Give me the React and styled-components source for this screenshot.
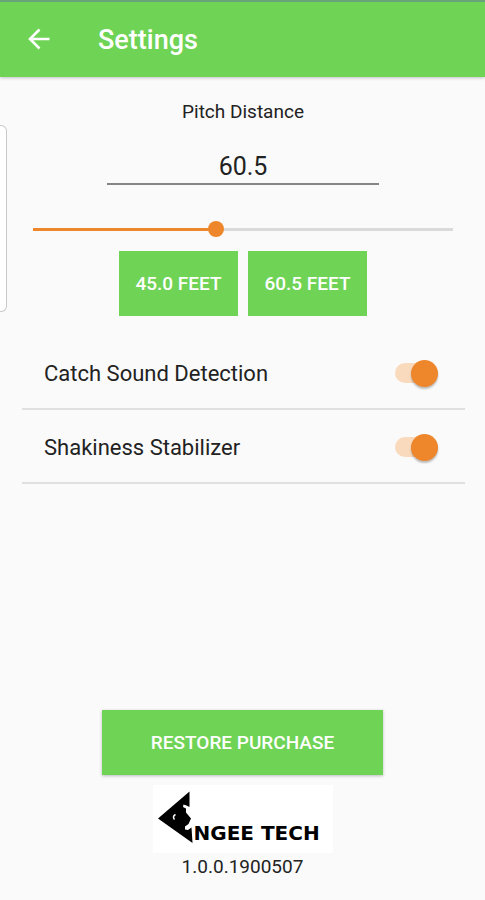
import React, { useState } from "react";
import styled, { createGlobalStyle } from "styled-components";

const GREEN = "#6fd355";
const ORANGE = "#ee862b";

const GlobalStyle = createGlobalStyle`
  *, *::before, *::after { box-sizing: border-box; }
  body {
    margin: 0;
    background: #fafafa;
    color: #222;
    font-family: Roboto, "Liberation Sans", sans-serif;
  }
`;

const Screen = styled.div`
  position: relative;
  display: flex;
  flex-direction: column;
  min-height: 100vh;
`;

const AppBar = styled.header`
  display: flex;
  align-items: center;
  gap: 46px;
  height: 77px;
  padding: 0 26px;
  border-top: 2px solid #67a279;
  background: ${GREEN};
  color: #fff;
  box-shadow: 0 1px 3px rgba(0, 0, 0, 0.22);
`;

const BackButton = styled.button`
  display: flex;
  padding: 0;
  border: 0;
  background: none;
  color: inherit;
  cursor: pointer;
`;

const Title = styled.h1`
  margin: 0;
  font-size: 27px;
  font-weight: 500;
  line-height: 32px;
`;

const EdgePanel = styled.aside`
  position: absolute;
  top: 125px;
  left: 0;
  width: 7px;
  height: 187px;
  border: 1px solid #c8c8c8;
  border-left: 0;
  border-radius: 0 6px 6px 0;
  background: #fff;
`;

const Content = styled.main`
  display: flex;
  flex: 1;
  flex-direction: column;
`;

const Distance = styled.section`
  display: flex;
  flex-direction: column;
  align-items: center;
  padding: 23px 32px 0 33px;
`;

const DistanceLabel = styled.label`
  font-size: 19px;
  line-height: 24px;
`;

const DistanceInput = styled.input`
  width: 272px;
  max-width: 100%;
  height: 40px;
  margin-top: 21px;
  padding: 4px 0 0;
  border: 0;
  border-bottom: 2px solid #858585;
  outline: 0;
  background: transparent;
  color: #222;
  font-family: inherit;
  font-size: 25px;
  text-align: center;
`;

const Slider = styled.input`
  appearance: none;
  width: 100%;
  height: 18px;
  margin: 35px 0 13px;
  background: linear-gradient(
      to right,
      ${ORANGE} var(--filled),
      #dadada var(--filled)
    )
    center / 100% 3px no-repeat;
  cursor: pointer;

  &::-webkit-slider-thumb {
    appearance: none;
    width: 16px;
    height: 16px;
    border-radius: 50%;
    background: ${ORANGE};
  }
`;

const Presets = styled.div`
  display: flex;
  gap: 10px;
`;

const ActionButton = styled.button`
  width: ${({ $wide }) => ($wide ? 281 : 119)}px;
  max-width: 100%;
  height: 65px;
  padding: 0;
  border: 0;
  background: ${GREEN};
  color: #fff;
  font-family: inherit;
  font-size: 19px;
  font-weight: 500;
  cursor: pointer;
  box-shadow: ${({ $wide }) => ($wide ? "0 1px 3px rgba(0, 0, 0, 0.25)" : "none")};
`;

const Options = styled.section`
  padding: 20px 20px 0 22px;
`;

const OptionRow = styled.label`
  display: flex;
  align-items: center;
  justify-content: space-between;
  height: 74px;
  padding: 2px 27px 0 22px;
  border-bottom: 2px solid #e0e0e0;
  font-size: 22px;
  cursor: pointer;
`;

const Toggle = styled.input`
  appearance: none;
  display: flex;
  align-items: center;
  justify-content: ${({ checked }) => (checked ? "flex-end" : "flex-start")};
  width: 43px;
  height: 20px;
  margin: 0;
  background: ${({ checked }) => (checked ? "#fadabd" : "#ccc")};
  border-radius: 10px;
  cursor: pointer;

  &::before {
    content: "";
    flex: none;
    width: 27px;
    height: 27px;
    border-radius: 50%;
    background: ${({ checked }) => (checked ? ORANGE : "#f5f5f5")};
    box-shadow: 0 2px 2px rgba(0, 0, 0, 0.25);
  }
`;

const Footer = styled.footer`
  display: flex;
  flex-direction: column;
  align-items: center;
  margin-top: auto;
  padding: 24px 20px 21px;
`;

const Logo = styled.div`
  display: flex;
  align-items: flex-end;
  width: 180px;
  height: 68px;
  margin-top: 10px;
  padding: 0 0 10px 5px;
  background: #fff;
  color: #000;
`;

const LogoText = styled.span`
  font-family: "DejaVu Sans", sans-serif;
  font-size: 20px;
  font-weight: 700;
  line-height: 20px;
  white-space: nowrap;
`;

const Version = styled.p`
  margin: 2px 0 0;
  font-size: 19px;
  line-height: 24px;
`;

function BackArrow() {
  return (
    <svg width="26" height="24" viewBox="0 0 26 24" fill="none" stroke="currentColor" strokeWidth="2.6" aria-hidden="true">
      <path d="M23.500 11H4.500M13.500 1.500 4 11l9.500 9.500" />
    </svg>
  );
}

function LogoMark() {
  return (
    <svg width="36" height="53" viewBox="0 0 36 53" aria-hidden="true">
      <path
        fill="#000"
        d="M0 28.500 31.500 1.500V17L28.500 15.500 25.500 14.500 25 17 28 18.500V22.500L33 28.500 30.500 34 27 36.500V39.500L30 40 33.500 37.500 34.500 53Z"
      />
      <path fill="none" stroke="#fff" strokeWidth="1.5" d="M17.500 24.500Q14 26.500 16.500 29.500" />
    </svg>
  );
}

export default function App() {
  const [distance, setDistance] = useState("60.5");
  const [catchSound, setCatchSound] = useState(true);
  const [stabilizer, setStabilizer] = useState(true);

  const ratio = Math.min(Math.max(Number(distance) / 140 || 0, 0), 1);

  return (
    <Screen>
      <GlobalStyle />
      <AppBar>
        <BackButton type="button" aria-label="Back">
          <BackArrow />
        </BackButton>
        <Title>Settings</Title>
      </AppBar>
      <EdgePanel />
      <Content>
        <Distance>
          <DistanceLabel htmlFor="distance">Pitch Distance</DistanceLabel>
          <DistanceInput
            id="distance"
            inputMode="decimal"
            value={distance}
            onChange={(e) => setDistance(e.target.value)}
          />
          <Slider
            type="range"
            aria-label="Pitch Distance"
            min="0"
            max="140"
            step="0.5"
            value={Number(distance) || 0}
            style={{ "--filled": `${ratio * 100}%` }}
            onChange={(e) => setDistance(Number(e.target.value).toFixed(1))}
          />
          <Presets>
            <ActionButton type="button" onClick={() => setDistance("45.0")}>
              45.0 FEET
            </ActionButton>
            <ActionButton type="button" onClick={() => setDistance("60.5")}>
              60.5 FEET
            </ActionButton>
          </Presets>
        </Distance>
        <Options>
          <OptionRow>
            Catch Sound Detection
            <Toggle
              type="checkbox"
              role="switch"
              checked={catchSound}
              onChange={(e) => setCatchSound(e.target.checked)}
            />
          </OptionRow>
          <OptionRow>
            Shakiness Stabilizer
            <Toggle
              type="checkbox"
              role="switch"
              checked={stabilizer}
              onChange={(e) => setStabilizer(e.target.checked)}
            />
          </OptionRow>
        </Options>
      </Content>
      <Footer>
        <ActionButton type="button" $wide>
          RESTORE PURCHASE
        </ActionButton>
        <Logo>
          <LogoMark />
          <LogoText>NGEE TECH</LogoText>
        </Logo>
        <Version>1.0.0.1900507</Version>
      </Footer>
    </Screen>
  );
}
